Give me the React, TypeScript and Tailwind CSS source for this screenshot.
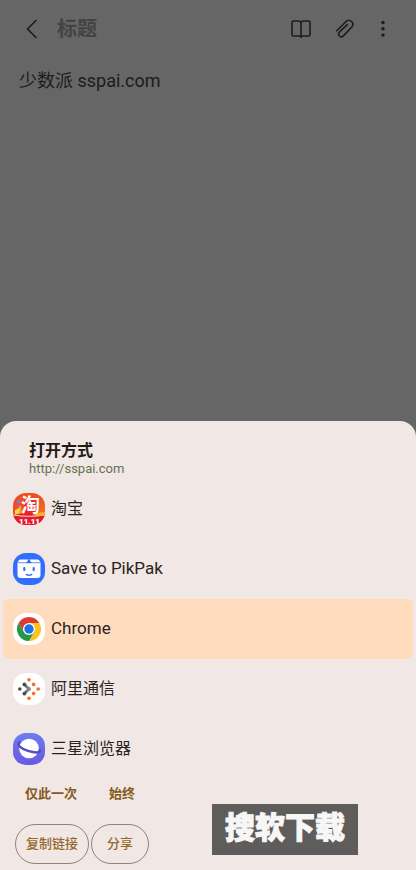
import type { ReactNode } from 'react';

const TaobaoIcon = () => (
  <svg viewBox="0 0 32 32" className="size-8 shrink-0 overflow-visible" aria-hidden="true">
    <defs>
      <clipPath id="taobao-clip">
        <rect width="32" height="32" rx="13" />
      </clipPath>
      <linearGradient id="taobao-bg" x1="0" y1="0" x2="1" y2="1">
        <stop offset="0" stopColor="#f04a1c" />
        <stop offset="0.5" stopColor="#f2501f" />
        <stop offset="1" stopColor="#f08a20" />
      </linearGradient>
    </defs>
    <g clipPath="url(#taobao-clip)">
      <rect width="32" height="32" fill="url(#taobao-bg)" />
      <path d="M2 18 L8 12 L9 20 L2 22Z" fill="#f79a2a" />
      <path d="M3 8 L8 6 L6 11Z" fill="#5b8fe0" />
      <path d="M2 12 L7 11 L4 15Z" fill="#e8458c" />
      <path d="M2 17 L7 15 L6 20 L2 22Z" fill="#f6dc3c" />
      <path d="M11 7 H26 V19 Q25 22 21 21 H11Z" fill="#ef2533" />
      <path d="M0 22 Q16 19 32 22 V32 H0Z" fill="#e51b30" />
      <path d="M0 22 Q16 24.5 32 22" fill="none" stroke="#f6e6b2" strokeWidth="1.2" />
      <path d="M19 22 Q26 19 32 19 V22.5 Q25 23.5 19 22Z" fill="#f6b52c" />
    </g>
    <text x="8" y="19" fontSize="19" fontWeight="700" fill="#fff" fontFamily="'Noto Sans CJK SC', sans-serif">
      淘
    </text>
    <text x="16.5" y="31" fontSize="8" fontWeight="900" textAnchor="middle" fill="#fff" fontFamily="Roboto, sans-serif">
      11.11
    </text>
  </svg>
);

const PikPakIcon = () => (
  <svg viewBox="0 0 32 32" className="size-8 shrink-0" aria-hidden="true">
    <rect width="32" height="32" rx="13" fill="#306eff" />
    <path d="M7 6.5 H25 Q27 7 27.5 10 V22 Q27.5 25 24.5 25 H7.5 Q4.5 25 4.5 22 V10 Q5 7 7 6.5Z" fill="#fff" />
    <path d="M5 9.6 Q12 10.2 16 9.2 Q20 10.2 27 9.6" fill="none" stroke="#306eff" strokeWidth="0.8" />
    <path d="M15.6 6 H16.4 L18.6 10.2 H13.4Z" fill="#306eff" />
    <rect x="10.2" y="14" width="2.2" height="4.2" rx="1.1" fill="#306eff" />
    <rect x="19.6" y="14" width="2.2" height="4.2" rx="1.1" fill="#306eff" />
    <path d="M13.2 21.4 Q16 23.2 18.8 21.4" fill="none" stroke="#306eff" strokeWidth="1.3" strokeLinecap="round" />
  </svg>
);

const ChromeIcon = () => (
  <svg viewBox="0 0 32 32" className="size-8 shrink-0" aria-hidden="true">
    <rect width="32" height="32" rx="13" fill="#fff" />
    <path d="M5.6 10 A12 12 0 0 1 26.4 10 H16 V16 L10.8 19Z" fill="#dd3a30" />
    <path d="M16 10 H26.4 A12 12 0 0 1 16 28 L21.2 19Z" fill="#fcc31e" />
    <path d="M5.6 10 A12 12 0 0 0 16 28 L21.2 19 L16 16 L10.8 19Z" fill="#25964a" />
    <circle cx="16" cy="16" r="6" fill="#fff" />
    <circle cx="16" cy="16" r="4.7" fill="#1b72e8" />
  </svg>
);

const AliTelecomIcon = () => (
  <svg viewBox="0 0 32 32" className="size-8 shrink-0" aria-hidden="true">
    <rect width="32" height="32" rx="13" fill="#fff" />
    <path d="M11.4 11.4 L16 16 L11.4 20.6" fill="none" stroke="#777" strokeWidth="2.8" />
    <g fill="#4a4a4c">
      <circle cx="6.8" cy="16" r="1.8" />
      <circle cx="11.4" cy="11.4" r="1.9" />
      <circle cx="11.4" cy="20.6" r="1.9" />
    </g>
    <circle cx="16" cy="16" r="2" fill="#8a8a8a" />
    <g fill="#f96a1b">
      <circle cx="16" cy="6.8" r="1.8" />
      <circle cx="20.6" cy="11.4" r="1.8" />
      <circle cx="25.2" cy="16" r="1.8" />
      <circle cx="20.6" cy="20.6" r="1.8" />
      <circle cx="16" cy="25.2" r="1.8" />
    </g>
  </svg>
);

const SamsungBrowserIcon = () => (
  <svg viewBox="0 0 32 32" className="size-8 shrink-0" aria-hidden="true">
    <defs>
      <linearGradient id="samsung-bg" x1="0" y1="0" x2="0" y2="1">
        <stop offset="0" stopColor="#6c7cf0" />
        <stop offset="1" stopColor="#6a58e4" />
      </linearGradient>
    </defs>
    <rect width="32" height="32" rx="13" fill="url(#samsung-bg)" />
    <circle cx="16" cy="15.5" r="9.8" fill="#fff" />
    <path
      d="M6.5 9.2 C3 11.5 8 15.8 15 17.9 C21.5 19.8 27.5 20.3 26.8 17.2"
      fill="none"
      stroke="#574bc0"
      strokeWidth="2.4"
      strokeLinecap="round"
    />
  </svg>
);

const BackIcon = () => (
  <svg viewBox="0 0 24 24" className="size-6" fill="none" stroke="currentColor" strokeWidth="1.6" strokeLinecap="round" strokeLinejoin="round">
    <path d="M16 3.5 L7.5 12 L16 20.5" />
  </svg>
);

const BookIcon = () => (
  <svg viewBox="0 0 24 24" className="size-6" fill="none" stroke="currentColor" strokeWidth="1.6" strokeLinejoin="round">
    <path d="M12 5.3 Q11.3 4 9.5 4 H4.5 Q3 4 3 5.5 V17.5 Q3 19 4.5 19 H10 Q11.5 19 12 20 Q12.5 19 14 19 H19.5 Q21 19 21 17.5 V5.5 Q21 4 19.5 4 H14.5 Q12.7 4 12 5.3Z" />
    <path d="M12 5.3 V20.5" />
  </svg>
);

const ClipIcon = () => (
  <svg viewBox="0 0 24 24" className="size-6" fill="none" stroke="currentColor" strokeWidth="1.6" strokeLinecap="round" strokeLinejoin="round">
    <path d="M3.8 13.8 L12.8 4.8 C16.8 .9 22.5 6.2 18.6 10.2 L10.6 18.6 C7.5 21.6 3.7 18 6.6 14.9 L14.4 7.7" />
  </svg>
);

const MoreIcon = () => (
  <svg viewBox="0 0 24 24" className="size-6" fill="currentColor">
    <circle cx="12" cy="5.5" r="1.7" />
    <circle cx="12" cy="11.8" r="1.7" />
    <circle cx="12" cy="18.1" r="1.7" />
  </svg>
);

type AppEntry = {
  name: string;
  icon: ReactNode;
  latin?: boolean;
  selected?: boolean;
};

const apps: AppEntry[] = [
  { name: '淘宝', icon: <TaobaoIcon /> },
  { name: 'Save to PikPak', icon: <PikPakIcon />, latin: true },
  { name: 'Chrome', icon: <ChromeIcon />, latin: true, selected: true },
  { name: '阿里通信', icon: <AliTelecomIcon /> },
  { name: '三星浏览器', icon: <SamsungBrowserIcon /> },
];

const NoteHeader = () => (
  <header className="flex h-[57px] items-center pl-5 pr-[21px] text-[#1c1c1c]">
    <button type="button" aria-label="返回">
      <BackIcon />
    </button>
    <h1 className="ml-[13px] flex-1 text-xl font-bold text-[#434343]">标题</h1>
    <div className="flex items-center gap-5">
      <button type="button" aria-label="阅读模式">
        <BookIcon />
      </button>
      <button type="button" aria-label="附件">
        <ClipIcon />
      </button>
      <button type="button" aria-label="更多" className="-ml-1.5">
        <MoreIcon />
      </button>
    </div>
  </header>
);

const OpenWithSheet = () => (
  <section className="relative mt-auto rounded-t-2xl bg-[#f1e7e5] pt-5 pb-1.5">
    <div className="pb-0.5 pl-[29px]">
      <h2 className="text-base leading-5 font-bold text-[#1f1b16]">打开方式</h2>
      <p className="text-[13px] leading-4 text-[#667350]">http://sspai.com</p>
    </div>
    <ul className="px-[3px]">
      {apps.map((app) => (
        <li key={app.name}>
          <button
            type="button"
            className={`flex h-[60px] w-full items-center gap-1.5 rounded-md px-2.5 text-left text-[#2a2522] ${
              app.latin ? 'text-[17px]' : 'text-base'
            } ${app.selected ? 'bg-[#fedcbd]' : ''}`}
          >
            {app.icon}
            {app.name}
          </button>
        </li>
      ))}
    </ul>
    <div className="flex h-[30px] items-center gap-8 pl-[25px] text-[13px] font-bold text-[#855a1c]">
      <button type="button">仅此一次</button>
      <button type="button">始终</button>
    </div>
    <div className="mt-[15px] flex gap-0.5 pl-[15px] text-[13px] font-medium text-[#94692f]">
      <button type="button" className="h-10 rounded-full border border-[#8f8475] px-2.5">
        复制链接
      </button>
      <button type="button" className="h-10 rounded-full border border-[#8f8475] px-[15px]">
        分享
      </button>
    </div>
    <div className="absolute right-[58px] bottom-[15px] bg-[#5f5c5c] px-[13px] pt-1.5 pb-[9px] text-3xl font-black text-[#f7f7f7] [-webkit-text-stroke:1px_#f7f7f7]">
      搜软下载
    </div>
  </section>
);

const App = () => {
  return (
    <div className="bg-white pr-1 font-[Roboto,'Noto_Sans_CJK_SC',sans-serif]">
      <div className="flex min-h-screen flex-col bg-[#666]">
        <NoteHeader />
        <main className="px-[19px] pt-2.5 text-lg text-[#1c1c1c]">少数派 sspai.com</main>
        <OpenWithSheet />
      </div>
    </div>
  );
};

export default App;
